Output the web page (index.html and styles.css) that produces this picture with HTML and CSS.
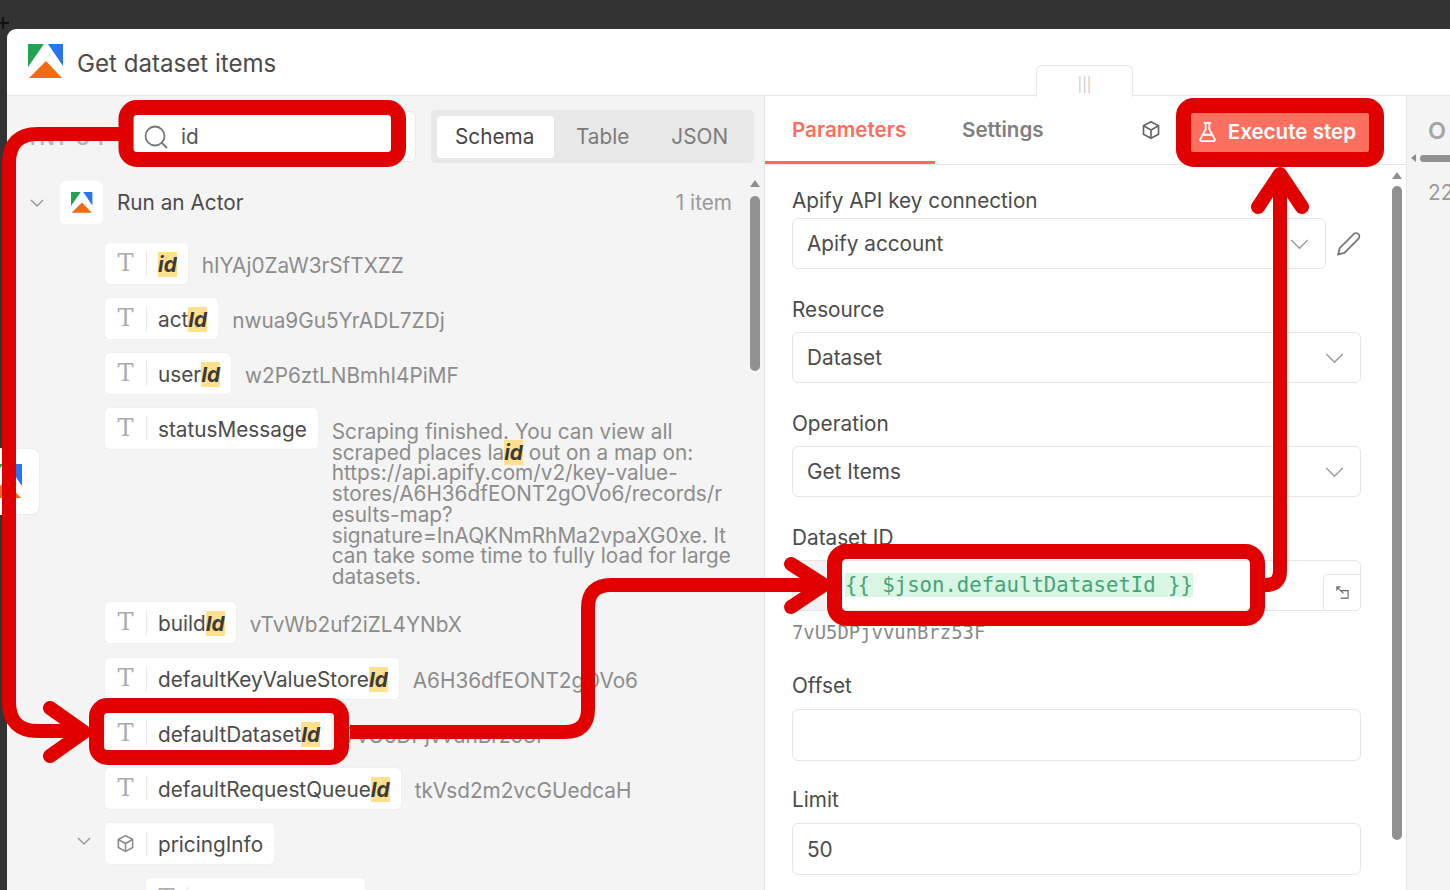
FILE: index.html
```html
<!DOCTYPE html>
<html lang="en">
<head>
<meta charset="utf-8">
<title>Get dataset items</title>
<link rel="stylesheet" href="styles.css">
</head>
<body>
<svg class="canvas-mark" viewBox="0 0 12 12" fill="none" stroke="#111" stroke-width="2"><path d="M6 0v12M0 6h12"/></svg>
<main class="modal">
  <header class="modal-head">
    <svg class="logo-lg" viewBox="0 0 36 36"><polygon points="0,0 16,0 0,23" fill="#22a356"/><polygon points="20,0 35,0 35,22" fill="#2b74f0"/><polygon points="18,17 34,34 1,34" fill="#f26b12"/></svg>
    <h1 class="modal-title">Get dataset items</h1>
  </header>
  <div class="modal-body">
    <section class="input-panel">
      <div class="input-head">
        <span class="panel-label">INPUT</span>
        <div class="search">
          <svg class="search-icon" viewBox="0 0 24 24" fill="none" stroke="#777" stroke-width="1.8"><circle cx="11" cy="11" r="9.5"/><path d="M18 18l5 5"/></svg>
          <span>id</span>
        </div>
        <div class="mode-tabs">
          <span class="mode-tab mode-active">Schema</span>
          <span class="mode-tab">Table</span>
          <span class="mode-tab">JSON</span>
        </div>
      </div>
      <div class="input-scroll">
        <div class="tree">
          <div class="actor-row">
            <svg class="chev" viewBox="0 0 16 16" fill="none" stroke="#999" stroke-width="1.5"><path d="M2 5l6 6 6-6"/></svg>
            <span class="actor-icon"><svg viewBox="0 0 36 36"><polygon points="0,0 16,0 0,23" fill="#22a356"/><polygon points="20,0 35,0 35,22" fill="#2b74f0"/><polygon points="18,17 34,34 1,34" fill="#f26b12"/></svg></span>
            <span class="actor-name">Run an Actor</span>
            <span class="actor-count">1 item</span>
          </div>
          <div class="rows">
            <div class="row"><span class="chip"><span class="t-icon">T</span><span class="chip-text"><mark>id</mark></span></span><span class="val">hIYAj0ZaW3rSfTXZZ</span></div>
            <div class="row"><span class="chip"><span class="t-icon">T</span><span class="chip-text">act<mark>Id</mark></span></span><span class="val">nwua9Gu5YrADL7ZDj</span></div>
            <div class="row"><span class="chip"><span class="t-icon">T</span><span class="chip-text">user<mark>Id</mark></span></span><span class="val">w2P6ztLNBmhI4PiMF</span></div>
            <div class="row"><span class="chip"><span class="t-icon">T</span><span class="chip-text">statusMessage</span></span><span class="val val-long">Scraping finished. You can view all<br>scraped places la<mark>id</mark> out on a map on:<br>https://api.apify.com/v2/key-value-<br>stores/A6H36dfEONT2gOVo6/records/r<br>esults-map?<br>signature=InAQKNmRhMa2vpaXG0xe. It<br>can take some time to fully load for large<br>datasets.</span></div>
            <div class="row"><span class="chip"><span class="t-icon">T</span><span class="chip-text">build<mark>Id</mark></span></span><span class="val">vTvWb2uf2iZL4YNbX</span></div>
            <div class="row"><span class="chip"><span class="t-icon">T</span><span class="chip-text">defaultKeyValueStore<mark>Id</mark></span></span><span class="val">A6H36dfEONT2gOVo6</span></div>
            <div class="row"><span class="chip"><span class="t-icon">T</span><span class="chip-text">defaultDataset<mark>Id</mark></span></span><span class="val">7vU5DPjvvunBrz53F</span></div>
            <div class="row"><span class="chip"><span class="t-icon">T</span><span class="chip-text">defaultRequestQueue<mark>Id</mark></span></span><span class="val">tkVsd2m2vcGUedcaH</span></div>
            <div class="row row-parent">
              <svg class="chev chev-nested" viewBox="0 0 16 16" fill="none" stroke="#999" stroke-width="1.5"><path d="M2 5l6 6 6-6"/></svg>
              <span class="chip"><span class="t-icon"><svg class="cube" viewBox="0 0 24 24" fill="none" stroke="#8a8a8a" stroke-width="2"><path d="M12 2l9 5v10l-9 5-9-5V7z"/><path d="M3 7l9 5 9-5M12 12v10"/></svg></span><span class="chip-text">pricingInfo</span></span>
            </div>
            <div class="row row-child"><span class="chip chip-child"><span class="t-icon">T</span></span></div>
          </div>
        </div>
        <div class="scrollbar scrollbar-left"><i class="sb-up"></i><i class="sb-thumb sb-thumb-left"></i></div>
      </div>
    </section>

    <section class="param-panel">
      <div class="param-tabs">
        <span class="param-tab param-active">Parameters</span>
        <span class="param-tab">Settings</span>
        <svg class="param-cube" viewBox="0 0 24 24" fill="none" stroke="#666" stroke-width="2"><path d="M12 2l9 5v10l-9 5-9-5V7z"/><path d="M3 7l9 5 9-5M12 12v10"/></svg>
        <button class="exec">
          <svg class="flask" viewBox="3 1 18 22" fill="none" stroke="#fff" stroke-width="2"><path d="M8 2h8M10 2v7L4 20a1.500 1.500 0 0 0 1.300 2h13.400a1.500 1.500 0 0 0 1.300-2L14 9V2M7 15h10"/></svg>
          Execute step
        </button>
      </div>
      <div class="param-scroll">
        <div class="form">
          <div class="field field-first">
            <label class="field-label">Apify API key connection</label>
            <div class="field-line">
              <div class="select select-short">Apify account<svg class="select-chev" viewBox="0 0 20 12" fill="none" stroke="#999" stroke-width="1.5"><path d="M1 1l9 9 9-9"/></svg></div>
              <svg class="pencil" viewBox="0 0 24 24" fill="none" stroke="#777" stroke-width="1.7"><path d="M2 22l1.500-6L17 2.500a2.500 2.500 0 0 1 4.500 4.500L8 20.500z"/></svg>
            </div>
          </div>
          <div class="field">
            <label class="field-label">Resource</label>
            <div class="select">Dataset<svg class="select-chev" viewBox="0 0 20 12" fill="none" stroke="#999" stroke-width="1.5"><path d="M1 1l9 9 9-9"/></svg></div>
          </div>
          <div class="field">
            <label class="field-label">Operation</label>
            <div class="select">Get Items<svg class="select-chev" viewBox="0 0 20 12" fill="none" stroke="#999" stroke-width="1.5"><path d="M1 1l9 9 9-9"/></svg></div>
          </div>
          <div class="field">
            <label class="field-label">Dataset ID</label>
            <div class="expr-box">
              <span class="expr-fx"></span>
              <span class="expr"><span class="expr-hl">{{ $json.defaultDatasetId }}</span></span>
              <span class="expand"><svg viewBox="0 0 16 16" fill="none" stroke="#666" stroke-width="1.2"><path d="M2 6V2h4M2 2l7 7M6 6h8v8H6"/></svg></span>
            </div>
            <div class="hint">7vU5DPjvvunBrz53F</div>
          </div>
          <div class="field field-tall">
            <label class="field-label">Offset</label>
            <div class="select"></div>
          </div>
          <div class="field field-tall">
            <label class="field-label">Limit</label>
            <div class="select">50</div>
          </div>
        </div>
        <div class="scrollbar scrollbar-right"><i class="sb-up"></i><i class="sb-thumb sb-thumb-right"></i></div>
      </div>
    </section>

    <section class="output-panel">
      <div class="output-title">OUTPUT</div>
      <div class="output-hscroll"><i class="sb-left"></i><i class="sb-hthumb"></i></div>
      <div class="output-count">22 items</div>
    </section>
  </div>
  <div class="drag-handle">|||</div>
</main>

<div class="canvas-node">
  <svg viewBox="0 0 36 36"><polygon points="0,0 16,0 0,23" fill="#22a356"/><polygon points="20,0 35,0 35,22" fill="#2b74f0"/><polygon points="18,17 34,34 1,34" fill="#f26b12"/></svg>
</div>

<svg class="annot" viewBox="0 0 1450 890" fill="none" stroke="#e00000" stroke-linecap="round" stroke-linejoin="round">
  <rect x="126" y="107.500" width="272.500" height="52" rx="11" stroke-width="15"/>
  <rect x="1183.500" y="105.500" width="193" height="54" rx="10" stroke-width="15"/>
  <rect x="96.500" y="705.500" width="245" height="52" rx="11" stroke-width="15"/>
  <rect x="834.500" y="551.500" width="423" height="67" rx="12" stroke-width="15"/>
  <path d="M120 134H38Q9 134 9 163V702Q9 731 38 731H82" stroke-width="14" stroke-linecap="butt"/>
  <path d="M50 708L84 732L50 756" stroke-width="14"/>
  <path d="M350 732H565Q588 732 588 709V608Q588 585 611 585H822" stroke-width="14" stroke-linecap="butt"/>
  <path d="M791 564L824 585L791 607" stroke-width="14"/>
  <path d="M1265 585H1266Q1280 585 1280 571V176" stroke-width="14" stroke-linecap="butt"/>
  <path d="M1258 207L1280 174L1302 207" stroke-width="14"/>
</svg>
</body>
</html>
```

FILE: styles.css
```css
* { box-sizing: border-box; }
html, body { margin: 0; height: 100%; }
body {
  position: relative;
  width: 1450px;
  height: 890px;
  overflow: hidden;
  background: #333;
  font-family: Inter, "Liberation Sans", sans-serif;
  font-size: 20.75px;
  color: #4a4a4a;
  padding: 29px 0 0 7px;
}
.canvas-mark { position: absolute; left: -3px; top: 17px; width: 12px; height: 12px; }

.modal {
  position: relative;
  width: 1443px;
  height: 861px;
  background: #fff;
  border-radius: 9px 0 0 0;
  display: flex;
  flex-direction: column;
  overflow: hidden;
}
.modal-head {
  flex: 0 0 67px;
  display: flex;
  align-items: center;
  gap: 13px;
  padding: 0 0 0 21px;
  border-bottom: 1px solid #e6e6e6;
}
.logo-lg { width: 36px; height: 36px; }
.modal-title { margin: 2px 0 0; font-size: 24.1px; font-weight: 400; color: #4b4b4b; }
.modal-body { flex: 1; display: flex; min-height: 0; }

.input-panel {
  flex: 0 0 757px;
  min-width: 0;
  background: #f4f4f4;
  display: flex;
  flex-direction: column;
  min-height: 0;
}
.input-head {
  flex: 0 0 84px;
  padding: 14px 11px 0 23px;
  display: flex;
  align-items: flex-start;
  position: relative;
}
.panel-label { position: absolute; left: 23px; top: 30px; color: #b5b5b5; font-size: 20px; font-weight: 600; letter-spacing: 4px; }
.search {
  margin: 1px 0 0 103px;
  flex: 0 0 283px;
  height: 51px;
  background: #fff;
  border: 1px solid #e8e8e8;
  border-radius: 6px;
  display: flex;
  align-items: center;
  gap: 13px;
  padding: 0 0 0 10px;
  position: relative;
  color: #555;
}
.search-icon { width: 24px; height: 24px; }
.mode-tabs {
  margin-left: 15px;
  flex: 0 0 321px;
  height: 53px;
  background: #e8e8e8;
  border-radius: 5px;
  padding: 5px 6px;
  display: flex;
  align-items: center;
  gap: 2px;
}
.mode-tab { padding: 0 20px; color: #7b7b7b; line-height: 42px; }
.mode-active { width: 117px; padding: 0 0 0 18px; background: #fff; color: #444; border-radius: 4px; }

.input-scroll { flex: 1; display: flex; min-height: 0; overflow: hidden; }
.tree { flex: 1; padding: 1px 0 0 22px; min-width: 0; }
.actor-row { display: flex; align-items: center; height: 43px; }
.chev { width: 16px; height: 16px; flex: none; }
.actor-icon {
  margin-left: 15px;
  width: 43px;
  height: 43px;
  background: #fff;
  border-radius: 6px;
  display: flex;
  align-items: center;
  justify-content: center;
}
.actor-icon svg { width: 22px; height: 22px; }
.actor-name { margin-left: 14px; color: #4b4b4b; }
.actor-count { margin-left: auto; margin-right: 17px; color: #999; }

.rows { display: flex; flex-direction: column; gap: 14px; padding: 19px 0 0 0; }
.row { display: flex; align-items: flex-start; padding-left: 76px; height: 41px; white-space: nowrap; }
.row:nth-child(4) { height: 180px; }
.row:nth-child(5) { height: 42px; }
.row-parent { padding-left: 47px; gap: 13px; }
.row-parent .chev { margin-top: 10px; }
.row-child { padding-left: 117px; }
.chip {
  display: flex;
  align-items: center;
  height: 41px;
  background: #fff;
  border-radius: 5px;
  box-shadow: 0 0 0 1px #f0f0f0;
  padding-right: 11px;
  flex: none;
}
.chip-child { width: 219px; }
.t-icon {
  width: 42px;
  height: 25px;
  line-height: 25px;
  text-align: center;
  border-right: 1px solid #e9e9e9;
  font-family: "DejaVu Serif", "Liberation Serif", serif;
  font-size: 24px;
  color: #ababab;
  margin-right: 11px;
  display: flex;
  align-items: center;
  justify-content: center;
}
.cube { width: 19px; height: 19px; }
.chip-text { color: #4b4b4b; padding-top: 1px; }
mark { background: #ffe08f; color: #3a3a3a; font-weight: 700; font-style: italic; }
.val { margin: 6px 0 0 14px; color: #8c8c8c; line-height: 34px; }
.val-long { line-height: 20.7px; margin-top: 14px; }

.scrollbar { flex: none; display: flex; flex-direction: column; align-items: center; }
.scrollbar-left { width: 11px; margin: 0 4px 0 0; }
.scrollbar-right { position: absolute; right: 4px; top: 7px; width: 11px; }
.sb-up { width: 0; height: 0; border: 5px solid transparent; border-top: 0; border-bottom: 7px solid #8f8f8f; }
.sb-thumb { display: block; width: 10px; margin-top: 7px; border-radius: 5px; background: #919191; }
.sb-thumb-left { height: 175px; margin-top: 9px; }
.sb-thumb-right { height: 654px; }

.param-panel {
  flex: 0 0 643px;
  display: flex;
  flex-direction: column;
  min-width: 0;
  min-height: 0;
  border-left: 1px solid #e6e6e6;
  border-right: 1px solid #e6e6e6;
}
.param-tabs {
  flex: 0 0 69px;
  display: flex;
  align-items: center;
  border-bottom: 1px solid #e6e6e6;
  position: relative;
}
.param-tab { align-self: stretch; font-size: 20.6px; font-weight: 600; color: #808080; padding: 0 27px; line-height: 67px; }
.param-active { color: #ff6d5a; box-shadow: inset 0 -3px 0 0 #ff6d5a; flex: 0 0 170px; white-space: nowrap; }
.param-cube { width: 20px; height: 20px; margin-left: 70px; flex: none; }
.exec {
  margin: 5px 0 0 29px;
  flex: 0 0 180px;
  height: 40px;
  border: 0;
  background: #fd7060;
  border-radius: 3px;
  display: flex;
  align-items: center;
  justify-content: flex-start;
  gap: 12px;
  padding: 0 0 2px 9px;
  color: #fff;
  font: 600 20.6px Inter, "Liberation Sans", sans-serif;
  white-space: nowrap;
}
.flask { width: 17px; height: 20px; flex: none; }

.param-scroll { flex: 1; position: relative; min-height: 0; overflow: hidden; }
.form { padding: 22px 45px 0 27px; }
.field { margin-bottom: 27px; }
.field-tall { margin-bottom: 25px; }
.field-label { display: block; line-height: 28px; color: #4b4b4b; margin-bottom: 8px; }
.field-first .field-label { margin-bottom: 3px; }
.field-tall .field-label { margin-bottom: 9px; }
.field-line { display: flex; align-items: center; }
.select {
  position: relative;
  height: 51px;
  background: #fff;
  border: 1px solid #e6e6e6;
  border-radius: 6px;
  display: flex;
  align-items: center;
  padding-left: 14px;
  color: #4b4b4b;
  flex: 1;
}
.field-tall .select { height: 52px; }
.select-short { flex: 0 0 534px; }
.select-chev { position: absolute; right: 16px; top: 20px; width: 19px; height: 11px; }
.pencil { width: 26px; height: 26px; margin-left: 10px; }
.expr-box {
  position: relative;
  height: 51px;
  border: 1px solid #e6e6e6;
  border-radius: 6px;
  background: #fff;
  display: flex;
  align-items: center;
}
.expr-fx { width: 36px; align-self: stretch; background: #f2f2f2; border-radius: 6px 0 0 6px; }
.expr { margin-left: 16px; font-family: "DejaVu Sans Mono", "Liberation Mono", monospace; font-size: 20.65px; line-height: 23px; color: #46a376; }
.expr-hl { background: #d9f5e4; }
.expand {
  position: absolute;
  right: -1px;
  bottom: -1px;
  width: 38px;
  height: 37px;
  background: #fff;
  border: 1px solid #e6e6e6;
  border-radius: 5px 0 5px 0;
  display: flex;
  align-items: center;
  justify-content: center;
}
.expand svg { width: 15px; height: 15px; }
.hint { height: 34px; padding-top: 10px; font-family: "DejaVu Sans Mono", "Liberation Mono", monospace; font-size: 18.9px; line-height: 23px; color: #8a8a8a; white-space: nowrap; }

.output-panel { flex: 1; background: #f4f4f4; padding: 20px 0 0 21px; white-space: nowrap; overflow: hidden; position: relative; }
.output-title { font-size: 23.5px; font-weight: 600; letter-spacing: 4px; color: #a5a5a5; line-height: 30px; }
.output-hscroll { position: absolute; left: 4px; top: 58px; display: flex; align-items: center; gap: 4px; }
.sb-left { width: 0; height: 0; border: 4px solid transparent; border-left: 0; border-right: 5px solid #8f8f8f; }
.sb-hthumb { display: block; width: 40px; height: 7px; border-radius: 4px; background: #919191; }
.output-count { margin-top: 34px; color: #9a9a9a; }

.drag-handle {
  position: absolute;
  left: 1029px;
  top: 36px;
  width: 97px;
  height: 32px;
  background: #fff;
  border: 1px solid #e9e9e9;
  border-bottom: 0;
  border-radius: 6px 6px 0 0;
  text-align: center;
  font-size: 14px;
  line-height: 38px;
  color: #c9c9c9;
}

.canvas-node {
  position: absolute;
  left: -30px;
  top: 448px;
  width: 70px;
  height: 67px;
  background: #fff;
  border: 1px solid #ececec;
  border-radius: 9px;
  display: flex;
  align-items: center;
  justify-content: center;
}
.canvas-node svg { width: 36px; height: 36px; }

.annot { position: absolute; left: 0; top: 0; width: 1450px; height: 890px; pointer-events: none; }
```
